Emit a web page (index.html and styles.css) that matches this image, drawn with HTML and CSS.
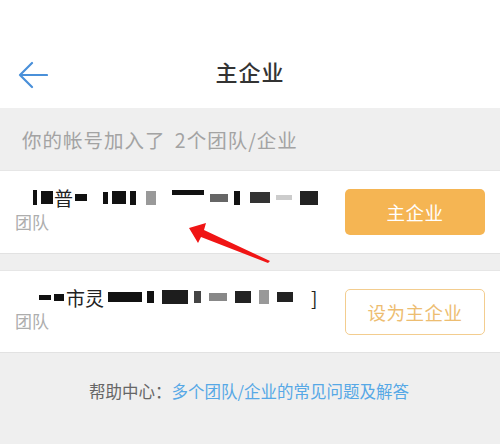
FILE: index.html
```html
<!DOCTYPE html>
<html lang="zh-CN">
<head>
<meta charset="utf-8">
<title>主企业</title>
<link rel="stylesheet" href="styles.css">
</head>
<body>
<div class="page">
  <header class="topbar">
    <button class="back" aria-label="返回">
      <svg width="30" height="28" viewBox="0 0 30 28"><path d="M14 2 L2 14 L14 26 M2 14 H29" fill="none" stroke="#4a90d9" stroke-width="2.2" stroke-linecap="round" stroke-linejoin="round"/></svg>
    </button>
    <h1 class="title">主企业</h1>
  </header>

  <p class="summary">你的帐号加入了 2个团队/企业</p>

  <section class="org">
    <div class="org-info">
      <div class="org-name"><span class="mask m1"></span><span class="mask m2"></span>普<span class="mask m3"></span><span class="gap"></span><span class="mask m4"></span><span class="mask m5"></span><span class="mask m6"></span><span class="gap"></span><span class="mask m7"></span><span class="mask m8"></span><span class="mask m9"></span><span class="mask m10"></span><span class="mask m11"></span><span class="mask m12"></span></div>
      <div class="org-type">团队</div>
    </div>
    <button class="btn btn-main">主企业</button>
  </section>

  <section class="org">
    <div class="org-info">
      <div class="org-name"><span class="mask n1"></span><span class="mask n2"></span>市灵<span class="mask n3"></span><span class="mask n4"></span><span class="mask n5"></span><span class="mask n6"></span><span class="mask n7"></span><span class="mask n8"></span><span class="mask n9"></span><span class="mask n10"></span>]</div>
      <div class="org-type">团队</div>
    </div>
    <button class="btn btn-set">设为主企业</button>
  </section>

  <p class="help">帮助中心：<a class="help-link" href="#">多个团队/企业的常见问题及解答</a></p>

  <svg class="pointer" width="90" height="45" viewBox="0 0 90 45">
    <path d="M1 5 L18 0 L16 7 L82 38 L80 40 L13 14 L10 20 Z" fill="#f01515"/>
  </svg>
</div>
</body>
</html>
```

FILE: styles.css
```css
* { box-sizing: border-box; }

html, body {
  margin: 0;
  padding: 0;
}

body {
  width: 500px;
  height: 444px;
  background: #efefef;
  font-family: "Noto Sans CJK SC", "Noto Sans", sans-serif;
  overflow: hidden;
}

.page {
  position: relative;
  height: 444px;
}

.topbar {
  height: 108px;
  background: #fff;
  display: flex;
  align-items: center;
  justify-content: center;
  position: relative;
  padding-top: 42px;
}

.back {
  position: absolute;
  left: 18px;
  top: 60px;
  border: 0;
  background: none;
  padding: 0;
  width: 32px;
  height: 30px;
  display: flex;
  align-items: center;
}

.title {
  margin: 0;
  font-size: 22px;
  font-weight: 500;
  color: #333;
  letter-spacing: 1px;
  line-height: 1;
  margin-top: -8px;
}

.summary {
  margin: 0;
  height: 62px;
  padding: 19px 0 0 22px;
  font-size: 19.5px;
  letter-spacing: 1px;
  word-spacing: 4px;
  color: #a3a3a3;
  line-height: 26px;
}

.org {
  background: #fff;
  height: 84px;
  display: flex;
  align-items: center;
  justify-content: space-between;
  padding: 0 15px 0 15px;
  margin-bottom: 16px;
  border-top: 1px solid #e6e6e6;
  border-bottom: 1px solid #e2e2e2;
}

.org + .org { height: 83px; }

.org-info {
  display: flex;
  flex-direction: column;
  gap: 0;
  margin-top: -5px;
}

.org-name {
  display: flex;
  align-items: center;
  height: 24px;
  padding-left: 18px;
  font-size: 19px;
  color: #222;
}

.org-type {
  font-size: 17px;
  color: #adadad;
  line-height: 24px;
}

/* redacted name fragments */
.mask {
  display: inline-block;
  background: #111;
  height: 14px;
  margin-right: 2px;
}
.gap { display: inline-block; width: 14px; }
.m1 { width: 4px; height: 15px; margin-right: 4px; }
.m2 { width: 12px; height: 13px; margin-right: 1px; }
.m3 { width: 12px; height: 7px; margin-left: 2px; }
.m4 { width: 5px; height: 12px; margin-right: 4px; }
.m5 { width: 14px; height: 13px; margin-right: 4px; }
.m6 { width: 26px; height: 14px; background: linear-gradient(90deg, #111 25%, #fff 25%, #fff 60%, #999 60%); }
.m7 { width: 32px; height: 5px; align-self: flex-start; margin-top: 4px; margin-right: 6px; }
.m8 { width: 18px; height: 8px; background: #666; margin-right: 6px; }
.m9 { width: 6px; height: 14px; margin-right: 10px; }
.m10 { width: 20px; height: 11px; background: #333; margin-right: 6px; }
.m11 { width: 16px; height: 5px; background: #ccc; margin-right: 8px; }
.m12 { width: 18px; height: 14px; background: #222; }

.n1 { width: 12px; height: 5px; margin-left: 6px; margin-right: 3px; }
.n2 { width: 10px; height: 7px; margin-right: 2px; }
.n3 { width: 34px; height: 10px; margin-left: 4px; margin-right: 5px; }
.n4 { width: 7px; height: 12px; margin-right: 8px; }
.n5 { width: 26px; height: 14px; background: #1d1d1d; margin-right: 6px; }
.n6 { width: 7px; height: 12px; background: #444; margin-right: 8px; }
.n7 { width: 18px; height: 8px; background: #888; margin-right: 8px; }
.n8 { width: 16px; height: 12px; background: #222; margin-right: 8px; }
.n9 { width: 10px; height: 14px; background: #999; margin-right: 8px; }
.n10 { width: 16px; height: 10px; background: #222; margin-right: 18px; }

.btn {
  width: 140px;
  height: 46px;
  border-radius: 5px;
  font-family: inherit;
  font-size: 18.5px;
  letter-spacing: 0.5px;
}

.btn-main {
  background: #f5b553;
  border: 0;
  color: #fff;
}

.btn-set {
  background: #fff;
  border: 1px solid #f3cd8f;
  color: #edbd71;
}

.help {
  margin: 0;
  padding: 10px 0 0 89px;
  font-size: 16.5px;
  line-height: 24px;
  color: #666;
}

.help-link {
  color: #56a8e6;
  text-decoration: none;
}

.pointer {
  position: absolute;
  left: 188px;
  top: 223px;
}
```
